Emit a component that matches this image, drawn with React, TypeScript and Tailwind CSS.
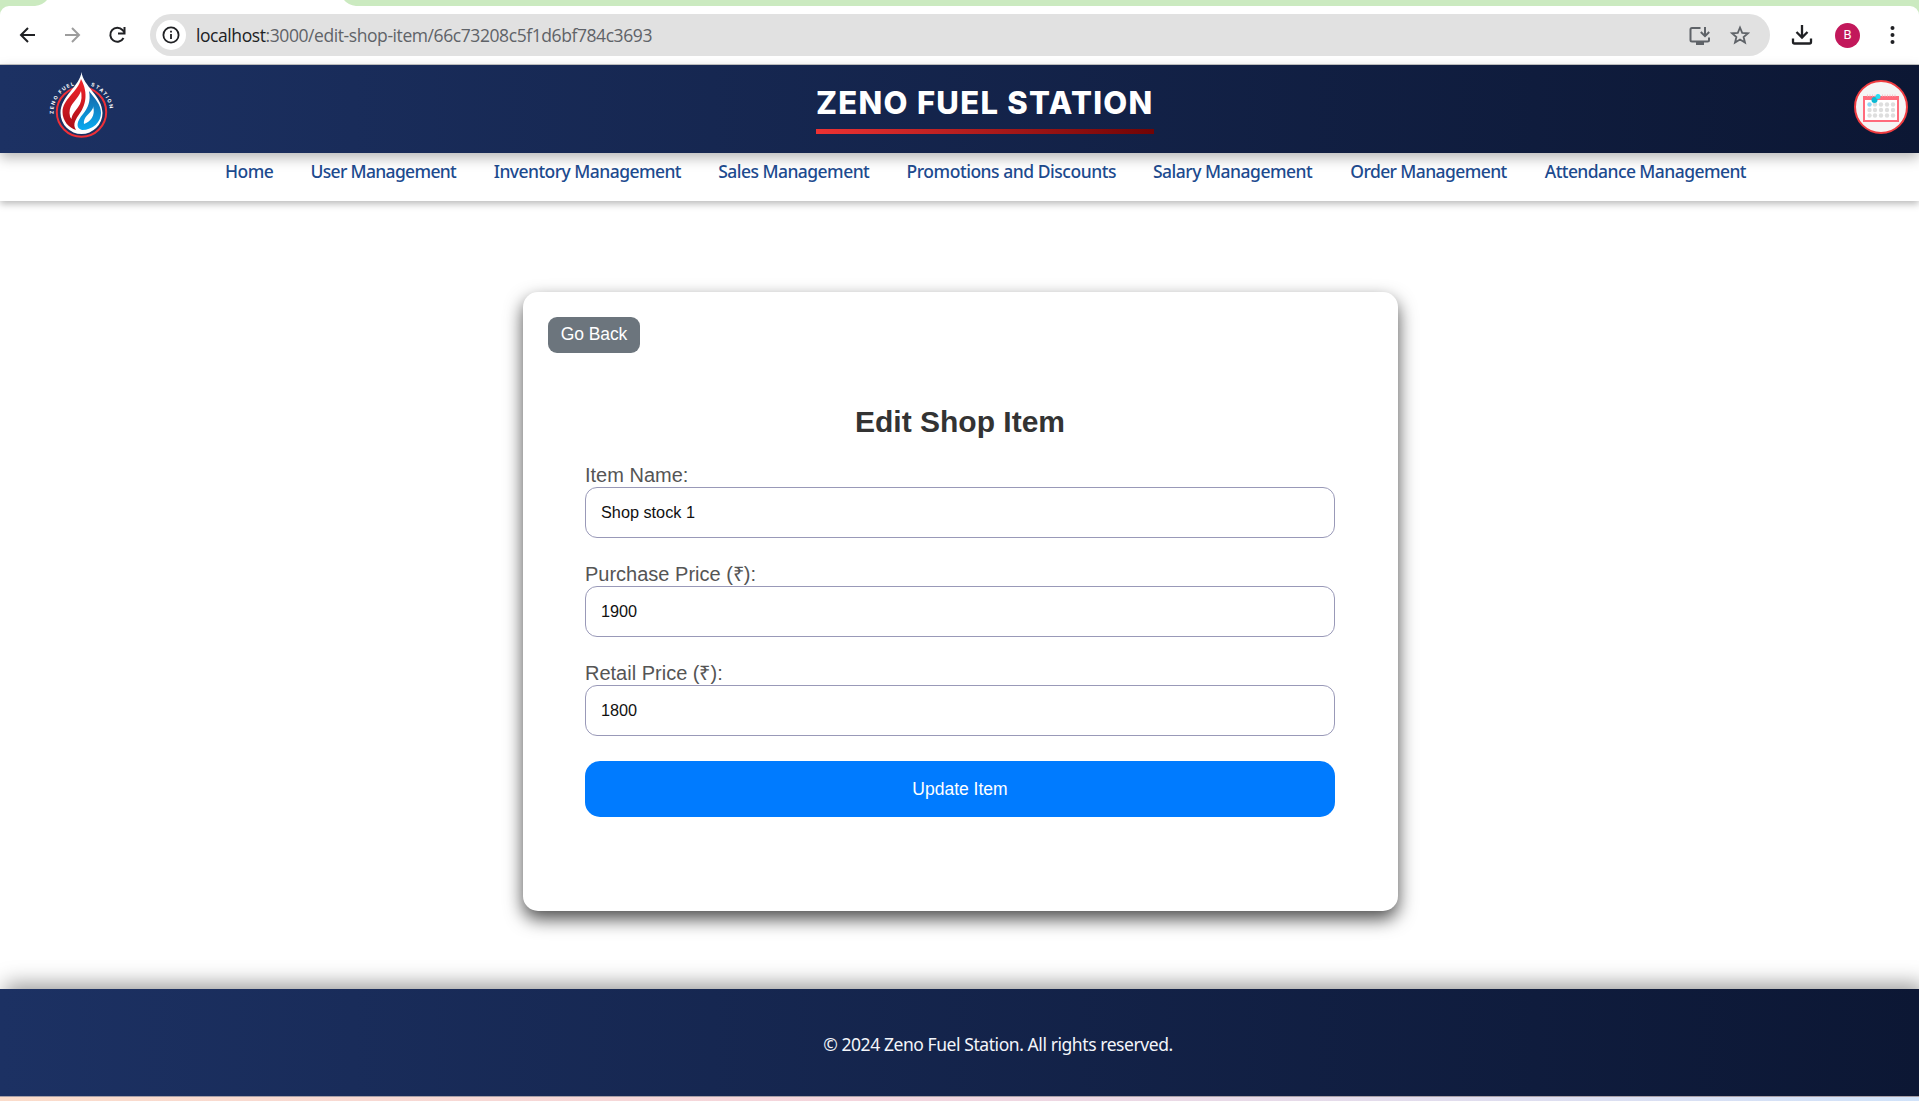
import React from "react";

const navItems = [
  { label: "Home", box: "w-[48px]", spacing: "tracking-[-0.5px]" },
  { label: "User Management", box: "w-[146px]", spacing: "tracking-[-0.66px]" },
  { label: "Inventory Management", box: "w-[187px]", spacing: "tracking-[-0.55px]" },
  { label: "Sales Management", box: "w-[151px]", spacing: "tracking-[-0.54px]" },
  { label: "Promotions and Discounts", box: "w-[209px]", spacing: "tracking-[-0.47px]" },
  { label: "Salary Management", box: "w-[160px]", spacing: "tracking-[-0.5px]" },
  { label: "Order Management", box: "w-[157px]", spacing: "tracking-[-0.6px]" },
  { label: "Attendance Management", box: "w-[202px]", spacing: "tracking-[-0.57px]" },
];

const fields = [
  { label: "Item Name:", value: "Shop stock 1" },
  { label: "Purchase Price (₹):", value: "1900" },
  { label: "Retail Price (₹):", value: "1800" },
];

function BrowserBar() {
  return (
    <div className="h-[65px] shrink-0 border-b border-[#c6c6c6] bg-[#cbeac0]">
      <div className="flex h-[6px] justify-between">
        <div className="relative w-[47px]">
          <svg className="absolute left-0 top-0" width="357" height="6" viewBox="0 0 357 6">
            <path d="M47 0H344Q348 5 356 6H35Q43 5 47 0Z" fill="#fff" />
          </svg>
        </div>
      </div>
      <div className="flex h-[58px] items-center rounded-t-[9px] bg-white pl-[16px]">
        <svg width="110" height="24" viewBox="0 0 110 24" fill="none" strokeWidth="2">
          <path d="M19 12H6M12 5L5 12L12 19" stroke="#202124" />
          <path d="M49 12H62M56 5L63 12L56 19" stroke="#9d9d9d" />
          <path d="M107.500 15A7 7 0 1 1 106.500 7L108.500 9.500" stroke="#202124" />
          <path d="M108.500 4V10.500H102" stroke="#202124" />
        </svg>
        <div className="ml-[24px] flex h-[42px] w-[1620px] shrink-0 items-center rounded-full bg-[#e1e1e1] pl-[6px]">
          <div className="flex size-[30px] items-center justify-center rounded-full bg-white">
            <svg width="18" height="18" viewBox="0 0 18 18" fill="none" stroke="#202124" strokeWidth="1.800">
              <circle cx="9" cy="9" r="7.600" />
              <path d="M9 8V13M9 4.700V6.500" />
            </svg>
          </div>
          <div className="ml-[10px] whitespace-nowrap font-['Open_Sans','Noto_Sans',sans-serif] text-[17.5px] leading-[24px] tracking-[-0.42px] text-[#5f6368]">
            <span className="text-[#202124]">localhost</span>:3000/edit-shop-item/66c73208c5f1d6bf784c3693
          </div>
          <svg className="ml-auto mr-[20px]" width="62" height="24" viewBox="0 0 62 24" fill="none" stroke="#5f6368" strokeWidth="2">
            <path d="M12.500 5H4Q2.500 5 2.500 6.500V17Q2.500 18.500 4 18.500H19.500Q21 18.500 21 17V14.500M17 4V12.500M12.800 9L17 13.200L21.200 9" />
            <path d="M8 20.500H16" strokeWidth="3" />
            <path d="M52 4.500L54.200 9.800L60 10.300L55.600 14L57 19.600L52 16.600L47 19.600L48.400 14L44 10.300L49.800 9.800Z" strokeWidth="1.800" />
          </svg>
        </div>
        <svg className="ml-[21px]" width="22" height="24" viewBox="0 0 22 24" fill="none" stroke="#202124" strokeWidth="2.300">
          <path d="M11 2V14M5.500 9L11 14.500L16.500 9M2 15.500V19Q2 20.500 3.500 20.500H18.500Q20 20.500 20 19V15.500" />
        </svg>
        <div className="ml-[22px] flex size-[25px] items-center justify-center rounded-full bg-[#c2185b] font-[Roboto,sans-serif] text-[13px] font-normal text-white">B</div>
        <svg className="ml-[30px]" width="5" height="20" viewBox="0 0 5 20" fill="#202124">
          <circle cx="2.500" cy="3" r="2" />
          <circle cx="2.500" cy="10" r="2" />
          <circle cx="2.500" cy="17" r="2" />
        </svg>
      </div>
    </div>
  );
}

function Logo() {
  return (
    <svg width="76" height="76" viewBox="0 0 76 76">
      <defs>
        <linearGradient id="flame" x1="0" y1="0" x2="0" y2="1">
          <stop stopColor="#f3262c" />
          <stop offset="1" stopColor="#a90d16" />
        </linearGradient>
        <linearGradient id="water" x1="0" y1="0" x2="0" y2="1">
          <stop stopColor="#1765a5" />
          <stop offset="1" stopColor="#09aaf0" />
        </linearGradient>
        <path id="ringText" d="M9.500 48A28.300 28.300 0 1 1 66 46" />
      </defs>
      <circle cx="37.500" cy="45" r="24.700" fill="none" stroke="#ef3038" strokeWidth="2" />
      <path d="M37.500 5C36 19 16.500 29 16.500 46A21 21 0 0 0 58.500 46C58.500 29 39 19 37.500 5Z" fill="#fff" />
      <path d="M37 12C34 25 18.500 32 18.500 45C18.500 54 25 61 32 63C28 57 32 52 36 46C41 39 45 27 37 12Z" fill="url(#flame)" />
      <path d="M37 24C34 33 25.500 36 25.500 46Q25.500 50 27.500 52C28 46 33 43 36 37Q38.500 31 37 24Z" fill="#fff" />
      <path d="M45 24C47 34 44 41 39 47C33 54 31 61 38 63C49 63 57 55 57 46C57 37 51 32 45 24Z" fill="url(#water)" />
      <path d="M49 39C50 45 39 48 40 57C46 55 52 49 49 39Z" fill="#fff" />
      <text fill="#fff" fontFamily="Inter, sans-serif" fontWeight="700" fontSize="5">
        <textPath href="#ringText" startOffset="1" textLength="38">ZENO FUEL</textPath>
      </text>
      <text fill="#fff" fontFamily="Inter, sans-serif" fontWeight="700" fontSize="5">
        <textPath href="#ringText" startOffset="56" textLength="31">STATION</textPath>
      </text>
    </svg>
  );
}

function CalendarBadge() {
  return (
    <div className="flex size-[54px] items-center justify-center rounded-full border-2 border-[#f03c40] bg-[#f5f5f5]">
      <svg className="mt-[1px] shrink-0" width="36" height="28" viewBox="0 0 36 28">
        <rect x="1" y="3" width="34" height="24" fill="#fff" stroke="#ff6b7c" strokeWidth="2" />
        <path d="M0 2H36V6H0Z" fill="#ff6b7c" />
        <path d="M4 1.500H15M19 1.500H33" stroke="#f4c5ca" strokeWidth="2" strokeDasharray="1 1.500" />
        {[10.5, 16, 21.5].map((y) =>
          [6.5, 12, 18, 24, 30].map((x) => (
            <circle key={`${x}-${y}`} cx={x} cy={y} r="2.200" fill={x === 6.5 && y === 10.5 ? "#91d8f4" : "#dedede"} />
          )),
        )}
        <circle cx="11.500" cy="6" r="3" fill="#0bb9d3" />
        <circle cx="15" cy="2.500" r="2.500" fill="#27dff4" />
      </svg>
    </div>
  );
}

export default function App() {
  return (
    <div className="flex h-[1101px] w-[1919px] flex-col overflow-hidden bg-white">
      <BrowserBar />

      <header className="relative z-20 flex h-[88px] shrink-0 items-start bg-linear-to-r from-[#1c3163] to-[#0c1734] pl-[44px] pr-[11px] shadow-[0_5px_12px_rgba(0,0,0,0.28)]">
        <div className="flex w-[772px] pt-[2px]">
          <Logo />
        </div>
        <div className="mt-[16px] w-[338px]">
          <h1 className="whitespace-nowrap font-[Inter,sans-serif] text-[31px] font-extrabold leading-[44px] tracking-[1.3px] text-white">ZENO FUEL STATION</h1>
          <div className="mt-[4px] h-[5px] bg-linear-to-r from-[#ee3233] to-[#710405]" />
        </div>
        <div className="ml-auto mt-[15px] flex">
          <CalendarBadge />
        </div>
      </header>

      <nav className="relative z-10 flex h-[48px] shrink-0 gap-[37.4px] bg-white pl-[225px] pt-[5px] shadow-[0_3px_7px_rgba(0,0,0,0.27)]">
        {navItems.map((item) => (
          <a key={item.label} className={`${item.box} ${item.spacing} shrink-0 whitespace-nowrap font-['Noto_Sans',sans-serif] text-[17.5px] font-medium leading-[26px] text-[#1d4b8f]`}>
            {item.label}
          </a>
        ))}
      </nav>

      <main className="flex flex-1 items-start justify-center pt-[91px] font-['Liberation_Sans',sans-serif]">
        <section className="ml-[2px] flex h-[619px] w-[875px] flex-col rounded-[15px] bg-white p-[25px] shadow-[0_8px_18px_rgba(0,0,0,0.7)]">
          <button className="h-[36px] w-[92px] rounded-[9px] bg-[#6c757d] pb-[2px] text-[17.5px] tracking-[-0.1px] text-white">Go Back</button>
          <h2 className="mt-[50px] pr-[1px] text-center text-[30px] font-bold leading-[38px] text-[#333]">Edit Shop Item</h2>
          <form className="ml-[37px] mr-[38px] mt-[22px] flex flex-col">
            {fields.map((field) => (
              <label key={field.label} className="mb-[24px] block text-[20px] leading-[24px] text-[#555]">
                {field.label}
                <input className="block h-[51px] w-full rounded-[12px] border border-[#9999b8] px-[15px] text-[16.25px] text-[#111]" defaultValue={field.value} />
              </label>
            ))}
            <button type="button" className="mt-[1px] h-[56px] rounded-[15px] bg-[#007bff] text-[17.5px] text-white">Update Item</button>
          </form>
        </section>
      </main>

      <footer className="flex h-[107px] shrink-0 items-center justify-center bg-linear-to-r from-[#1c3163] to-[#0c1734] pl-[77px] pt-[3px] shadow-[5px_-5px_20px_rgba(0,0,0,0.4)]">
        <p className="whitespace-nowrap font-['Noto_Sans',sans-serif] text-[17.5px] tracking-[-0.43px] text-[#f3f5fa]">© 2024 Zeno Fuel Station. All rights reserved.</p>
      </footer>
      <div className="h-[5px] shrink-0 border-t border-[#a79fa7] bg-linear-to-r from-[#fbdcca] via-[#f4d5dd] via-45% to-[#d1e3fa]" />
    </div>
  );
}
